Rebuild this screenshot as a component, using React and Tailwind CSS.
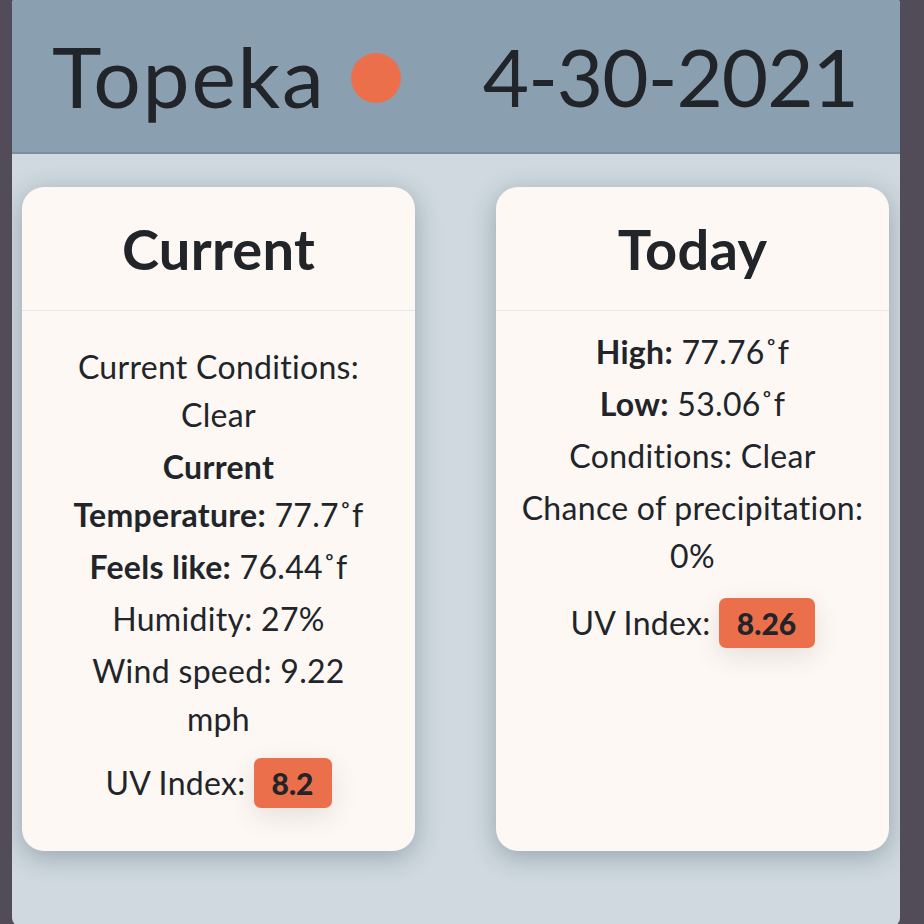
export default function App() {
  return (
    <div className="h-[924px] w-[924px] overflow-hidden bg-[#524b58] font-['Lato',_'Liberation_Sans',_sans-serif] text-[#212529]">
      <div className="ml-[12px] -mt-[4px] flex h-[930px] w-[888px] flex-col overflow-hidden rounded-[8px] bg-[#cfd9df]">
        <header className="flex h-[158px] shrink-0 items-center justify-between border-b-2 border-[#7b8d9e] bg-[#8aa0b1] pl-[40px] pr-[42px] pt-[4px]">
          <div className="flex items-center">
            <span className="text-[84px] font-normal leading-none tracking-[1.8px]">Topeka</span>
            <span className="ml-[25px] mt-[4px] inline-block h-[50px] w-[50px] rounded-full bg-[#ec6f4c] blur-[0.5px]"></span>
          </div>
          <span className="text-[80px] font-normal leading-none tracking-[-1px]">4-30-2021</span>
        </header>
        <main className="flex items-stretch gap-[81px] pl-[10px] pt-[33px]">
          <section className="flex w-[393px] flex-col rounded-[22px] bg-[#fdf8f4] shadow-[0_6px_26px_rgba(40,55,75,0.32)]">
            <div className="flex h-[124px] items-center justify-center border-b border-[#e3e8ed]">
              <h2 className="text-[56px] font-bold leading-none tracking-[0.3px]">Current</h2>
            </div>
            <div className="flex flex-col items-center pb-[43px] pt-[32px] text-center text-[32px] leading-[48px] tracking-[0.3px]">
              <p className="mb-[4px]">Current Conditions:<br />Clear</p>
              <p className="mb-[4px]"><b>Current</b><br /><b>Temperature:</b> 77.7˚f</p>
              <p className="mb-[4px]"><b>Feels like:</b> 76.44˚f</p>
              <p className="mb-[4px]">Humidity: 27%</p>
              <p>Wind speed: 9.22<br />mph</p>
              <div className="mt-[15px] flex items-center gap-[8px]">
                <span>UV Index:</span>
                <span className="flex h-[50px] w-[78px] items-center justify-center rounded-[7px] bg-[#ec6f4c] text-[30px] font-black leading-none tracking-normal shadow-[0_8px_28px_rgba(0,0,0,0.1)]">8.2</span>
              </div>
            </div>
          </section>
          <section className="flex w-[393px] flex-col rounded-[22px] bg-[#fdf8f4] shadow-[0_6px_26px_rgba(40,55,75,0.32)]">
            <div className="flex h-[124px] items-center justify-center border-b border-[#e3e8ed]">
              <h2 className="text-[56px] font-bold leading-none tracking-[0.3px]">Today</h2>
            </div>
            <div className="flex flex-col items-center pt-[17px] text-center text-[32px] leading-[48px] tracking-[0.3px]">
              <p className="mb-[4px]"><b>High:</b> 77.76˚f</p>
              <p className="mb-[4px]"><b>Low:</b> 53.06˚f</p>
              <p className="mb-[4px]">Conditions: Clear</p>
              <p>Chance of precipitation:<br />0%</p>
              <div className="mt-[18px] flex items-center gap-[8px]">
                <span>UV Index:</span>
                <span className="flex h-[50px] w-[96px] items-center justify-center rounded-[7px] bg-[#ec6f4c] text-[30px] font-black leading-none tracking-normal shadow-[0_8px_28px_rgba(0,0,0,0.1)]">8.26</span>
              </div>
            </div>
          </section>
        </main>
      </div>
    </div>
  );
}
